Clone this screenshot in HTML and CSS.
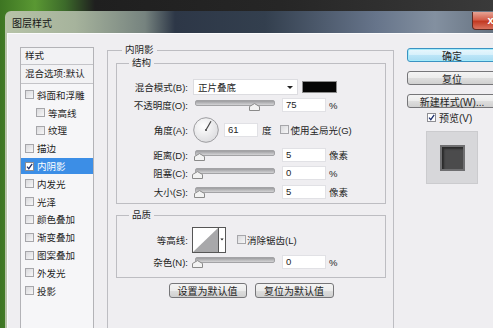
FILE: index.html
```html
<!DOCTYPE html>
<html lang="zh">
<head>
    <meta charset="UTF-8">
    <meta name="viewport" content="width=device-width, initial-scale=1.0">
    <title>图层样式</title>
    <link rel="stylesheet" href="styles.css">
</head>
<body>
<div class="screen">
    <div class="dialog">
        <div class="titlebar">
            <span class="title">图层样式</span>
            <span class="close">x</span>
        </div>
        <div class="panel">

            <!-- список стилей слева -->
            <ul class="style-list">
                <li class="list-head">样式</li>
                <li class="list-head blend">混合选项:默认</li>
                <li class="item"><span class="check"></span>斜面和浮雕</li>
                <li class="item sub"><span class="check"></span>等高线</li>
                <li class="item sub"><span class="check"></span>纹理</li>
                <li class="item"><span class="check"></span>描边</li>
                <li class="item selected"><span class="check on"><svg width="7" height="7" viewBox="0 0 7 7"><path d="M1 3.6 L2.8 5.6 L6.2 0.8" fill="none" stroke="#1d2f6e" stroke-width="1.3"/></svg></span>内阴影</li>
                <li class="item"><span class="check"></span>内发光</li>
                <li class="item"><span class="check"></span>光泽</li>
                <li class="item"><span class="check"></span>颜色叠加</li>
                <li class="item"><span class="check"></span>渐变叠加</li>
                <li class="item"><span class="check"></span>图案叠加</li>
                <li class="item"><span class="check"></span>外发光</li>
                <li class="item"><span class="check"></span>投影</li>
            </ul>

            <!-- параметры внутренней тени -->
            <div class="main">
                <fieldset class="group outer">
                    <legend class="outer-legend">内阴影</legend>

                    <fieldset class="group inner struct">
                        <legend>结构</legend>
                        <div class="row r-blend">
                            <span class="lbl">混合模式(B):</span>
                            <div class="select">正片叠底<span class="arrow"></span></div>
                            <div class="swatch"></div>
                        </div>
                        <div class="row r-opacity">
                            <span class="lbl">不透明度(O):</span>
                            <div class="slider"><svg class="thumb" style="left: 54px" width="11" height="8" viewBox="0 0 11 8"><path d="M0.5 7.5 V3.5 L5.5 0.6 L10.5 3.5 V7.5 Z" fill="#f3f3f3" stroke="#8a8a8a"/></svg></div>
                            <div class="num">75</div>
                            <span class="unit">%</span>
                        </div>
                        <div class="row r-angle">
                            <span class="lbl">角度(A):</span>
                            <svg class="dial" width="26" height="26" viewBox="0 0 26 26">
                                <defs>
                                    <radialGradient id="dialFill" cx="40%" cy="35%" r="75%">
                                        <stop offset="0" stop-color="#ffffff"/>
                                        <stop offset="1" stop-color="#d9d9dc"/>
                                    </radialGradient>
                                </defs>
                                <circle cx="13" cy="13" r="12.3" fill="url(#dialFill)" stroke="#9d9da0"/>
                                <line x1="13.4" y1="12.2" x2="18" y2="4.3" stroke="#474747" stroke-width="1.2"/>
                                <circle cx="13" cy="13" r="1" fill="#333"/>
                            </svg>
                            <div class="num short">61</div>
                            <span class="unit deg">度</span>
                            <span class="check cb-global"></span>
                            <span class="cb-text">使用全局光(G)</span>
                        </div>
                        <div class="row r-distance">
                            <span class="lbl">距离(D):</span>
                            <div class="slider"><svg class="thumb" style="left: -1px" width="11" height="8" viewBox="0 0 11 8"><path d="M0.5 7.5 V3.5 L5.5 0.6 L10.5 3.5 V7.5 Z" fill="#f3f3f3" stroke="#8a8a8a"/></svg></div>
                            <div class="num">5</div>
                            <span class="unit">像素</span>
                        </div>
                        <div class="row r-choke">
                            <span class="lbl">阻塞(C):</span>
                            <div class="slider"><svg class="thumb" style="left: -3px" width="11" height="8" viewBox="0 0 11 8"><path d="M0.5 7.5 V3.5 L5.5 0.6 L10.5 3.5 V7.5 Z" fill="#f3f3f3" stroke="#8a8a8a"/></svg></div>
                            <div class="num">0</div>
                            <span class="unit">%</span>
                        </div>
                        <div class="row r-size">
                            <span class="lbl">大小(S):</span>
                            <div class="slider"><svg class="thumb" style="left: -1px" width="11" height="8" viewBox="0 0 11 8"><path d="M0.5 7.5 V3.5 L5.5 0.6 L10.5 3.5 V7.5 Z" fill="#f3f3f3" stroke="#8a8a8a"/></svg></div>
                            <div class="num">5</div>
                            <span class="unit">像素</span>
                        </div>
                    </fieldset>

                    <fieldset class="group inner quality">
                        <legend>品质</legend>
                        <div class="row r-contour">
                            <span class="lbl">等高线:</span>
                            <svg class="contour" width="34" height="26" viewBox="0 0 34 26">
                                <rect x="0.5" y="0.5" width="33" height="25" fill="#fff" stroke="#565656"/>
                                <path d="M1 25 L26 1 V25 Z" fill="#a8a8aa"/>
                                <line x1="26.5" y1="0.5" x2="26.5" y2="25.5" stroke="#565656"/>
                                <path d="M28.4 11.6 H31.6 L30 13.6 Z" fill="#1c1c1c"/>
                            </svg>
                            <span class="check cb-aa"></span>
                            <span class="cb-text">消除锯齿(L)</span>
                        </div>
                        <div class="row r-noise">
                            <span class="lbl">杂色(N):</span>
                            <div class="slider"><svg class="thumb" style="left: -3px" width="11" height="8" viewBox="0 0 11 8"><path d="M0.5 7.5 V3.5 L5.5 0.6 L10.5 3.5 V7.5 Z" fill="#f3f3f3" stroke="#8a8a8a"/></svg></div>
                            <div class="num">0</div>
                            <span class="unit">%</span>
                        </div>
                    </fieldset>

                    <div class="defaults">
                        <div class="btn btn-default">设置为默认值</div>
                        <div class="btn btn-reset">复位为默认值</div>
                    </div>
                </fieldset>
            </div>

            <!-- кнопки справа -->
            <div class="side">
                <div class="btn primary">确定</div>
                <div class="btn">复位</div>
                <div class="btn">新建样式(W)...</div>
                <div class="preview-toggle">
                    <span class="check on"><svg width="7" height="7" viewBox="0 0 7 7"><path d="M1 3.6 L2.8 5.6 L6.2 0.8" fill="none" stroke="#1d2f6e" stroke-width="1.3"/></svg></span>预览(V)
                </div>
                <div class="preview">
                    <div class="preview-square"></div>
                </div>
            </div>

        </div>
    </div>
</div>
</body>
</html>
```

FILE: styles.css
```css
* {
    box-sizing: border-box;
}
body {
    margin: 0;
    font-family: "Liberation Sans", "Noto Sans CJK SC", sans-serif;
    font-size: 9.5px;
    color: #1e1e1e;
}
.screen {
    width: 493px;
    height: 328px;
    overflow: hidden;
    background: linear-gradient(to right, #3d7522 0, #5a9833 35px, #3c6a2a 65px, #1f1f1f 95px, #262626 280px, #3a3a3a 100%);
}
.dialog {
    margin: 11px 0 0 5px;
    width: 510px;
    height: 330px;
    padding-left: 2px;
    border-radius: 6px 6px 0 0;
    background: linear-gradient(to right, #b7c3a8 0, #a6b39c 70px, #76837f 140px, #2d3747 170px, #333f4e 260px, #66748a 370px, #8390a0 430px, #5c6876 510px);
}
.titlebar {
    height: 22px;
    display: flex;
    align-items: center;
    padding-left: 5px;
}
.title {
    font-size: 10px;
    color: #151515;
}
.close {
    align-self: flex-start;
    margin: 1px 6px 0 auto;
    width: 37px;
    height: 18px;
    border: 1px solid #5e2a22;
    border-top: none;
    border-radius: 0 0 4px 4px;
    background: linear-gradient(#e6a394 0, #d4604c 45%, #c23a22 55%, #d9735f 100%);
    color: #fff;
    font-weight: bold;
    font-size: 11px;
    line-height: 16px;
    text-align: center;
}
.panel {
    height: 300px;
    display: flex;
    align-items: flex-start;
    padding: 10px 0 0 12px;
    background: #efeef1;
    border-top: 1px solid #fbfbfc;
    border-left: 1px solid #f8f8f8;
}

/* список стилей */
.style-list {
    list-style: none;
    margin: 3px 0 0 0;
    padding: 0;
    width: 74px;
    height: 290px;
    flex: none;
    border: 1px solid #b3b3b7;
    background: #f6f6f8;
}
.list-head {
    height: 17px;
    line-height: 16px;
    padding-left: 4px;
    border-bottom: 1px solid #c4c4c8;
    background: #f2f2f4;
}
.list-head.blend {
    height: 19px;
    line-height: 18px;
    margin-bottom: 2px;
}
.item {
    height: 17.8px;
    display: flex;
    align-items: center;
    padding-left: 4px;
}
.item.sub {
    padding-left: 15px;
}
.item.selected {
    background: linear-gradient(#f6f6f8 0, #f6f6f8 1px, #3c8ee6 1px, #3c8ee6 16.8px, #f6f6f8 16.8px);
    color: #fff;
}
.check {
    width: 9px;
    height: 9px;
    flex: none;
    margin-right: 3px;
    border: 1px solid #a6a6aa;
    background: linear-gradient(135deg, #d9d9dc, #f7f7f8);
    display: flex;
    align-items: center;
    justify-content: center;
}
.check.on {
    background: #fff;
    border-color: #8d8d92;
}

/* группы */
.main {
    margin-left: 13px;
    width: 287px;
    flex: none;
}
fieldset {
    margin: 0;
    min-width: 0;
    border: 1px solid #bdbdc2;
}
legend {
    padding: 0 3px;
    line-height: 12px;
    font-size: 9.5px;
}
.outer {
    padding: 1px 7px 40px 8px;
}
.outer-legend {
    margin-left: 6px;
}
.inner {
    padding: 0;
}
.inner legend {
    margin-left: 12px;
}
.struct {
    padding: 10px 0 4px 0;
}
.quality {
    margin-top: 5px;
    padding: 6px 0 8px 0;
}
.row {
    display: flex;
    align-items: center;
    height: 14px;
}
.lbl {
    width: 71px;
    flex: none;
    text-align: right;
}
.r-blend {
    height: 16px;
}
.r-opacity {
    margin-top: 3px;
}
.r-angle {
    margin-top: 4px;
    height: 27px;
}
.r-distance {
    margin-top: 5px;
}
.r-choke {
    margin-top: 4px;
}
.r-size {
    margin-top: 5px;
}
.r-contour {
    height: 25px;
}
.r-noise {
    margin-top: 3px;
}
.select {
    margin-left: 5px;
    width: 105px;
    height: 16px;
    display: flex;
    align-items: center;
    padding-left: 4px;
    background: #fff;
    border: 1px solid #dcdce0;
}
.arrow {
    margin: 1px 4px 0 auto;
    border-left: 3px solid transparent;
    border-right: 3px solid transparent;
    border-top: 3px solid #222;
}
.swatch {
    margin-left: 4px;
    width: 35px;
    height: 12px;
    background: #050505;
    border: 1px solid #8c8c8c;
}
.slider {
    position: relative;
    margin-left: 7px;
    width: 80px;
    height: 14px;
    flex: none;
}
.slider::before {
    content: "";
    display: block;
    margin-top: 2px;
    height: 4px;
    border: 1px solid #a3a3a6;
    border-radius: 2px;
    background: linear-gradient(#9d9da0, #d4d4d6);
}
.thumb {
    position: absolute;
    top: 5px;
}
.num {
    margin-left: 7px;
    width: 44px;
    height: 14px;
    padding-left: 3px;
    line-height: 12px;
    background: #fff;
    border: 1px solid #e1e1e5;
}
.num.short {
    margin-left: 5px;
    width: 34px;
}
.unit {
    margin-left: 3px;
}
.unit.deg {
    margin-left: 4px;
}
.dial {
    margin-left: 5px;
    flex: none;
}
.cb-global {
    margin-left: 8px;
    margin-right: 2px;
}
.contour {
    margin-left: 4px;
    flex: none;
}
.cb-aa {
    margin-left: 11px;
    margin-right: 1px;
}
.defaults {
    display: flex;
    justify-content: center;
    gap: 8px;
    margin-top: 5px;
}

/* кнопки */
.btn {
    height: 14px;
    display: flex;
    align-items: center;
    justify-content: center;
    font-size: 10px;
    border: 1px solid #767679;
    border-radius: 3px;
    background: linear-gradient(#f4f4f4 0, #ececec 50%, #dedede 50%, #d0d0d0 100%);
}
.btn-default {
    width: 78px;
    height: 15px;
}
.btn-reset {
    width: 79px;
    height: 15px;
}
.side {
    margin: 4px 0 0 13px;
    width: 90px;
    flex: none;
}
.side .btn {
    margin-bottom: 9px;
}
.side .btn.primary {
    border-color: #3b93c2;
    box-shadow: inset 0 0 0 1px #a4ecfb;
    background: linear-gradient(#e9f7fd 0, #d6f0fb 50%, #bde6f8 50%, #a9dcf2 100%);
}
.preview-toggle {
    margin-top: -6px;
    height: 12px;
    display: flex;
    align-items: center;
    padding-left: 20px;
    font-size: 10px;
}
.preview {
    margin: 8px 0 0 19px;
    width: 52px;
    height: 53px;
    display: flex;
    align-items: center;
    justify-content: center;
    background: #d7d7da;
    border: 1px solid #cbcbce;
}
.preview-square {
    width: 25px;
    height: 26px;
    background: #4b4b4c;
    border: 2px solid #6f6f71;
    box-shadow: inset 2px 2px 2px #2a2a2a;
}
```
